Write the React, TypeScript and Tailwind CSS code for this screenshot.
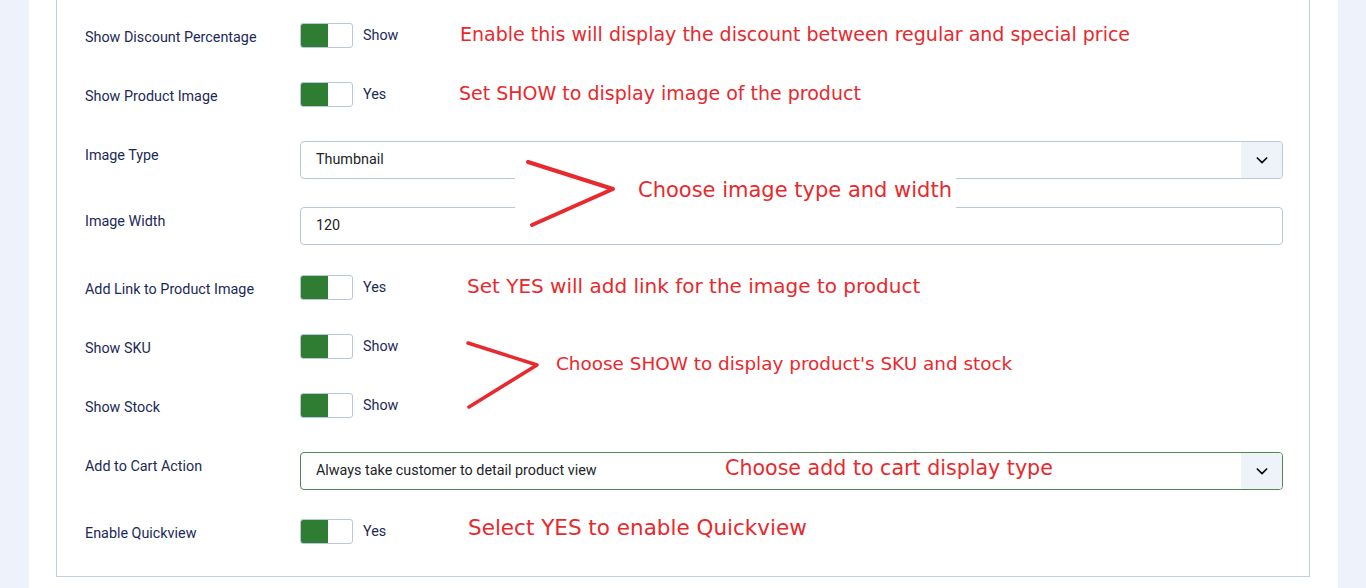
import React from "react";

type Row =
  | { kind: "toggle"; label: string; value: string; mt: string }
  | { kind: "select"; label: string; value: string; mt: string; focused?: boolean }
  | { kind: "input"; label: string; value: string; mt: string };

const rows: Row[] = [
  { kind: "toggle", label: "Show Discount Percentage", value: "Show", mt: "mt-0" },
  { kind: "toggle", label: "Show Product Image", value: "Yes", mt: "mt-[34px]" },
  { kind: "select", label: "Image Type", value: "Thumbnail", mt: "mt-[34px]" },
  { kind: "input", label: "Image Width", value: "120", mt: "mt-[28px]" },
  { kind: "toggle", label: "Add Link to Product Image", value: "Yes", mt: "mt-[30px]" },
  { kind: "toggle", label: "Show SKU", value: "Show", mt: "mt-[34px]" },
  { kind: "toggle", label: "Show Stock", value: "Show", mt: "mt-[34px]" },
  {
    kind: "select",
    label: "Add to Cart Action",
    value: "Always take customer to detail product view",
    mt: "mt-[34px]",
    focused: true,
  },
  { kind: "toggle", label: "Enable Quickview", value: "Yes", mt: "mt-[29px]" },
];

function Toggle({ value }: { value: string }) {
  return (
    <div className="flex items-center">
      <div className="flex h-[25px] w-[53px] overflow-hidden rounded-[3px] border border-[#b9c7dc] bg-white">
        <div className="h-full w-[27px] bg-[#2f7d32]" />
      </div>
      <span className="ml-[10px] text-[14.35px] leading-5 text-[#1b2a57]">{value}</span>
    </div>
  );
}

function Chevron() {
  return (
    <svg width="16" height="16" viewBox="0 0 24 24" fill="none" stroke="#111" strokeWidth={2.6} strokeLinecap="round" strokeLinejoin="round">
      <path d="M5 9l7 7 7-7" />
    </svg>
  );
}

function Select({ value, focused }: { value: string; focused?: boolean }) {
  return (
    <div
      className={`flex h-[38px] w-full overflow-hidden rounded-[4px] border bg-white ${
        focused ? "border-[#4f8653]" : "border-[#b9c7dc]"
      }`}
    >
      <div className="flex flex-1 items-center pl-[15px] text-[14.35px] text-[#212529]">{value}</div>
      <div className="flex w-[41px] items-center justify-center bg-[#eef2f9]">
        <Chevron />
      </div>
    </div>
  );
}

function Field({ value }: { value: string }) {
  return (
    <div className="flex h-[38px] w-full items-center rounded-[4px] border border-[#b9c7dc] bg-white pl-[15px] text-[14.35px] text-[#212529]">
      {value}
    </div>
  );
}

function Note({ text, className }: { text: string; className: string }) {
  return (
    <div
      className={`absolute whitespace-nowrap leading-[22px] text-[#e8292d] ${className}`}
      style={{ fontFamily: '"DejaVu Sans", Verdana, sans-serif' }}
    >
      {text}
    </div>
  );
}

export default function App() {
  return (
    <div
      className="relative flex h-[588px] w-[1366px] overflow-hidden bg-[#eef3fb]"
      style={{ fontFamily: 'Roboto, "Liberation Sans", Arial, sans-serif' }}
    >
      <div className="ml-[29px] h-full w-[1309px] bg-white pl-[27px] pr-[28px]">
        <div className="border-x border-b border-[#c3cee0] pb-[32px] pl-[28px] pr-[26px] pt-[23px]">
          {rows.map((r) => (
            <div key={r.label} className={`flex items-start ${r.mt}`}>
              <div className="w-[215px] shrink-0 pt-[5px] text-[14.35px] leading-5 text-[#1b2a57]">{r.label}</div>
              <div className="flex-1">
                {r.kind === "toggle" && <Toggle value={r.value} />}
                {r.kind === "select" && <Select value={r.value} focused={r.focused} />}
                {r.kind === "input" && <Field value={r.value} />}
              </div>
            </div>
          ))}
        </div>
      </div>

      {/* annotations pasted over the form */}
      <Note text="Enable this will display the discount between regular and special price" className="left-[460px] top-[23px] text-[19px]" />
      <Note text="Set SHOW to display image of the product" className="left-[459px] top-[82px] text-[19px]" />

      <div className="absolute left-[515px] top-[150px] h-[86px] w-[441px] bg-white">
        <svg className="absolute left-0 top-0" width="120" height="86" viewBox="0 0 120 86">
          <path d="M13 12 L98 39 L17 75" fill="none" stroke="#e8292d" strokeWidth={4} strokeLinecap="round" strokeLinejoin="round" />
        </svg>
      </div>
      <Note text="Choose image type and width" className="left-[638px] top-[179px] text-[21px]" />

      <Note text="Set YES will add link for the image to product" className="left-[467px] top-[275px] text-[20px]" />

      <svg className="absolute left-[460px] top-[335px]" width="90" height="80" viewBox="0 0 90 80">
        <path d="M8 8 L77 30 L9 72" fill="none" stroke="#e8292d" strokeWidth={3.5} strokeLinecap="round" strokeLinejoin="round" />
      </svg>
      <Note text="Choose SHOW to display product's SKU and stock" className="left-[556px] top-[353px] text-[18.4px]" />

      <Note text="Choose add to cart display type" className="left-[725px] top-[457px] text-[20.6px]" />
      <Note text="Select YES to enable Quickview" className="left-[468px] top-[517px] text-[21.5px]" />
    </div>
  );
}
